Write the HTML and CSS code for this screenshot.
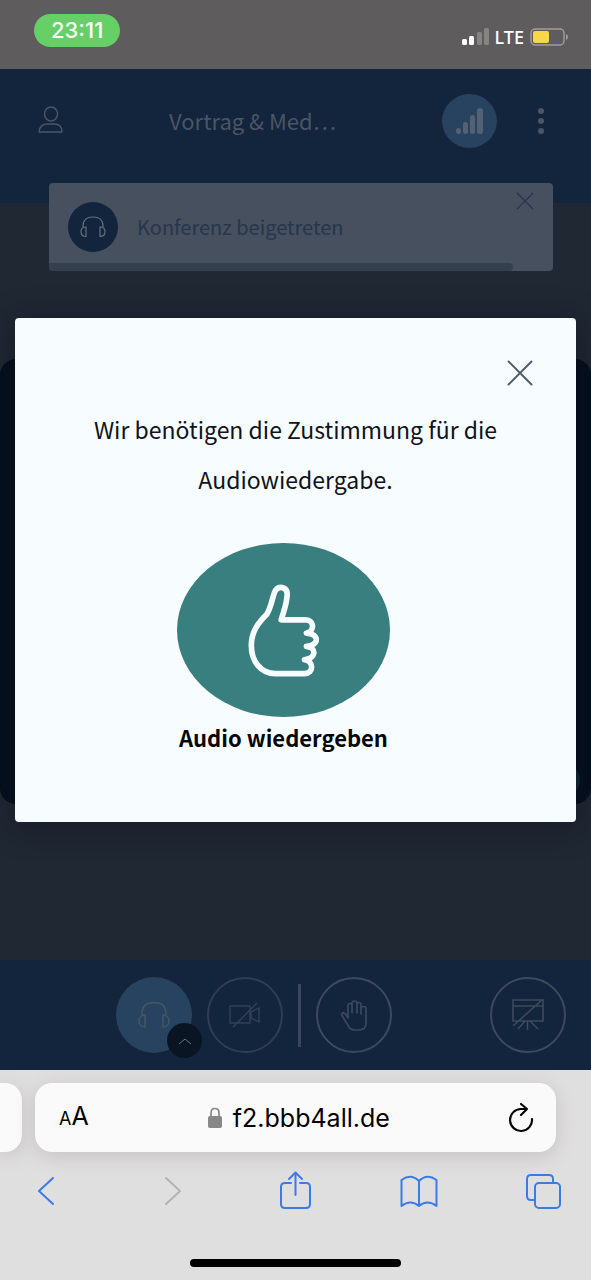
FILE: index.html
```html
<!DOCTYPE html>
<html lang="de">
<head>
<meta charset="utf-8">
<meta name="viewport" content="width=device-width, initial-scale=1">
<title>Vortrag &amp; Medien</title>
<link rel="stylesheet" href="styles.css">
</head>
<body>
<div class="status-bar">
  <time class="clock">23:11</time>
  <div class="status-icons">
    <svg class="signal" viewBox="0 0 27 18" width="27" height="18" aria-hidden="true">
      <rect x="0" y="11" width="5" height="6" rx="1.500" fill="#fff"/>
      <rect x="7" y="8" width="5" height="9" rx="1.500" fill="#fff"/>
      <rect x="15" y="4" width="5" height="13" rx="1.500" fill="#858383"/>
      <rect x="22" y="0" width="5" height="17" rx="1.500" fill="#858383"/>
    </svg>
    <span class="network">LTE</span>
    <svg viewBox="0 0 39 18" width="39" height="18" aria-hidden="true">
      <rect x="1" y="1" width="33" height="16" rx="4" fill="none" stroke="#a09e9e" stroke-width="1.400"/>
      <rect x="3" y="3" width="16" height="12" rx="2" fill="#f5d84a"/>
      <path d="M36 6q2 1 2 3t-2 3z" fill="#a09e9e"/>
    </svg>
  </div>
</div>

<div class="app">
  <header class="navbar">
    <button class="icon-button" aria-label="Teilnehmer">
      <svg viewBox="0 0 25 31" width="25" height="31" fill="none" stroke="currentColor" stroke-width="1.500">
        <ellipse cx="13" cy="8" rx="6.500" ry="7"/>
        <path d="M1 26c0-5 4-8 8-8h7c5 0 8 3 8 8z" stroke-linejoin="round"/>
      </svg>
    </button>
    <h1 class="title">Vortrag &amp; Med…</h1>
    <button class="connection" aria-label="Verbindungsstatus">
      <svg viewBox="0 0 27 27" width="27" height="27" fill="currentColor">
        <rect x="0" y="20" width="5" height="6" rx="2.500"/>
        <rect x="7" y="14" width="5" height="12" rx="2.500"/>
        <rect x="14" y="7" width="5" height="19" rx="2.500"/>
        <rect x="21" y="0" width="6" height="26" rx="2.800"/>
      </svg>
    </button>
    <button class="icon-button" aria-label="Optionen">
      <svg viewBox="0 0 12 28" width="12" height="28" fill="currentColor">
        <circle cx="6" cy="4" r="3"/><circle cx="6" cy="14" r="3"/><circle cx="6" cy="24" r="3"/>
      </svg>
    </button>
  </header>

  <main class="stage">
    <div class="media"><span class="media-action"></span></div>
  </main>

  <footer class="actions">
    <div class="action-group">
      <div class="audio">
        <button class="round filled" aria-label="Audio">
          <svg viewBox="0 0 32 28" width="32" height="28" fill="none" stroke="currentColor" stroke-width="1.500">
            <path d="M4 14v-1C4 5 9 1.500 16 1.500S28 5 28 13v1M7 14v12c-4 0-6-3-6-6s2-6 6-6zM25 14v12c4 0 6-3 6-6s-2-6-6-6z"/>
          </svg>
        </button>
        <button class="audio-menu" aria-label="Audiogerät wechseln">
          <svg viewBox="0 0 14 8" width="14" height="8" fill="none" stroke="currentColor"><path d="M1 7l6-5 6 5"/></svg>
        </button>
      </div>
      <button class="round dim" aria-label="Webcam freigeben">
        <svg viewBox="0 0 32 26" width="32" height="26" fill="none" stroke="currentColor" stroke-width="1.500">
          <path d="M1 4h20v17H1zM30 6v14l-8-4v-6zM4 25L28 1"/>
        </svg>
      </button>
      <span class="divider"></span>
      <button class="round" aria-label="Hand heben">
        <svg viewBox="0 0 28 32" width="28" height="32" fill="none" stroke="currentColor" stroke-width="1.600" stroke-linecap="round" stroke-linejoin="round">
          <path d="M8 19V6.500q0-2 2-2t2 2V14V4q0-2 2.500-2T17 4v10V5.500q0-2 2-2t2 2V15V9.500q0-2 2.500-2T26 9.500V24q0 7-7 7h-5q-3 0-5-3L2 16.500q-1-2 .500-2.500t3 1z"/>
        </svg>
      </button>
    </div>
    <button class="round" aria-label="Präsentation wiederherstellen">
      <svg viewBox="0 0 32 32" width="32" height="32" fill="none" stroke="currentColor" stroke-width="1.600">
        <path d="M1 1h30v21H1zM1 7h30M1 27L31 0M15.500 22v9M13 22l-7 8M18 22l8 8"/>
      </svg>
    </button>
  </footer>

  <div class="toast" role="status">
    <div class="toast-body">
      <span class="toast-icon">
        <svg viewBox="0 0 26 22" width="26" height="22" fill="none" stroke="currentColor" stroke-width="1.200">
          <path d="M3 11v-1c0-6 4-9 10-9s10 3 10 9v1M6 11v9.500c-3 0-5-2-5-5s2-4.500 5-4.500zM20 11v9.500c3 0 5-2 5-5S23 11 20 11z"/>
        </svg>
      </span>
      <span class="toast-text">Konferenz beigetreten</span>
      <button class="toast-close" aria-label="Schließen">
        <svg viewBox="0 0 18 18" width="18" height="18" stroke="currentColor" stroke-width="1.300"><path d="M1 1l16 16M17 1L1 17"/></svg>
      </button>
    </div>
    <div class="toast-progress"></div>
  </div>

  <section class="modal" role="dialog" aria-modal="true" aria-labelledby="modal-text">
    <button class="modal-close" aria-label="Schließen">
      <svg viewBox="0 0 26 26" width="26" height="26" stroke="currentColor" stroke-width="1.900" stroke-linecap="round"><path d="M1.500 1.500l23 23M24.500 1.500l-23 23"/></svg>
    </button>
    <p class="modal-text" id="modal-text">Wir benötigen die Zustimmung für die Audiowiedergabe.</p>
    <button class="play-audio">
      <span class="play-icon">
        <svg viewBox="262 160 214 280" width="71" height="93" fill="none" stroke="currentColor" stroke-width="17" stroke-linecap="round" stroke-linejoin="round">
          <path d="M362 268H436C462 268 464 302 438 308C478 310 478 344 438 348C470 352 468 384 432 388C462 392 460 430 432 430H345C300 430 272 392 272 345C272 303 292 278 318 252C334 228 336 192 345 179C356 164 382 168 380 194C378 224 370 240 362 268Z"/>
        </svg>
      </span>
      <span class="play-label">Audio wiedergeben</span>
    </button>
  </section>
</div>

<div class="browser">
  <div class="tabs">
    <div class="tab-previous"></div>
    <div class="address">
      <button class="text-size" aria-label="Darstellung"><span class="small-a">A</span>A</button>
      <span class="url">
        <svg viewBox="0 0 16 22" width="16" height="22" aria-hidden="true"><rect x="1" y="9" width="14" height="12" rx="2" fill="#87878a"/><path d="M4 10V6q0-4.500 4-4.500T12 6v4" fill="none" stroke="#87878a" stroke-width="1.700"/></svg>
        f2.bbb4all.de
      </span>
      <button class="reload" aria-label="Neu laden">
        <svg viewBox="0 0 26 30" width="26" height="30" fill="none" stroke="currentColor" stroke-width="2.100" stroke-linecap="round" stroke-linejoin="round"><path d="M24 16A11 11 0 1 1 13 6h6M13 1l6 5-6 6"/></svg>
      </button>
    </div>
  </div>
  <nav class="toolbar">
    <button aria-label="Zurück"><svg viewBox="0 0 38 40" width="38" height="40"><path d="M26 7L12 20l14 13"/></svg></button>
    <button class="disabled" aria-label="Vorwärts" disabled><svg viewBox="0 0 38 40" width="38" height="40"><path d="M15 7l14 13-14 13"/></svg></button>
    <button aria-label="Teilen"><svg viewBox="0 0 38 40" width="38" height="40"><path d="M15 12H9q-4 0-4 4v17q0 4 4 4h21q4 0 4-4V16q0-4-4-4h-6M19.500 24V1.500M13 8l6.500-6.500L26 8"/></svg></button>
    <button aria-label="Lesezeichen"><svg viewBox="0 0 38 40" width="38" height="40"><path d="M19 10v25M19 10Q11 2 1.500 9v26q9-7 17.500 0 8.500-7 17.500 0V9Q27 2 19 10z"/></svg></button>
    <button aria-label="Tabs"><svg viewBox="0 0 38 40" width="38" height="40"><path d="M10 29H7q-4 0-4-4V8q0-4 4-4h18q4 0 4 4v4"/><rect x="11" y="12" width="25" height="25" rx="4"/></svg></button>
  </nav>
  <div class="home-indicator"></div>
</div>
</body>
</html>
```
FILE: styles.css
```css
* {
  box-sizing: border-box;
}

body {
  margin: 0;
  min-height: 100vh;
  display: flex;
  flex-direction: column;
  font-family: "Noto Sans CJK SC", "Noto Sans", sans-serif;
}

button {
  margin: 0;
  padding: 0;
  border: 0;
  background: none;
  color: inherit;
  font: inherit;
}

svg {
  display: block;
}

.status-bar {
  height: 69px;
  padding: 14px 22px 0 34px;
  display: flex;
  justify-content: space-between;
  align-items: flex-start;
  background: #5e5c5c;
  color: #fff;
}

.clock {
  padding: 0 17px;
  border-radius: 17px;
  background: #66cf67;
  font: 500 22px/33px Inter, sans-serif;
}

.status-icons {
  display: flex;
  align-items: center;
  gap: 6px;
  padding-top: 11px;
}

.network {
  font: 500 18px/24px "Noto Sans", sans-serif;
}

.app {
  position: relative;
  flex: 1;
  display: flex;
  flex-direction: column;
  background: #1f2833;
}

.navbar {
  display: flex;
  align-items: center;
  padding: 25px 44px 55px 38px;
  background: #13243d;
  color: #4b5565;
}

.title {
  flex: 1;
  margin: 0;
  padding-bottom: 2px;
  font-size: 22px;
  line-height: 32px;
  font-weight: 400;
  text-align: center;
}

.connection {
  width: 55px;
  height: 54px;
  margin-right: 38px;
  display: grid;
  place-items: center;
  border-radius: 50%;
  background: #27435f;
  color: #536173;
}

.stage {
  flex: 1;
  display: flex;
  padding: 156px 0;
}

.media {
  flex: 1;
  display: flex;
  align-items: flex-end;
  justify-content: flex-end;
  padding: 0 11px 8px;
  border-radius: 16px;
  background: #03101f;
}

.media-action {
  width: 32px;
  height: 32px;
  border-radius: 50%;
  background: #0b2a3a;
}

.actions {
  display: flex;
  align-items: center;
  padding: 17px 25px 17px 18px;
  background: #13243d;
  color: #3e4a5c;
}

.action-group {
  flex: 1;
  display: flex;
  align-items: center;
  justify-content: center;
  gap: 15px;
}

.round {
  width: 76px;
  height: 76px;
  display: grid;
  place-items: center;
  border: 2px solid #3e4a5c;
  border-radius: 50%;
}

.dim {
  border-color: #303d55;
  color: #333f54;
}

.filled {
  border: 0;
  background: #27435f;
  color: #465668;
}

.audio {
  position: relative;
}

.audio-menu {
  position: absolute;
  right: -10px;
  bottom: -5px;
  width: 35px;
  height: 35px;
  display: grid;
  place-items: center;
  border-radius: 50%;
  background: #0a1524;
  color: #657080;
}

.divider {
  width: 3px;
  height: 63px;
  background: #3a465a;
}

.toast {
  position: absolute;
  top: 114px;
  left: 49px;
  right: 38px;
  overflow: hidden;
  border-radius: 4px;
  background: #47505e;
  color: #26364c;
}

.toast-body {
  display: flex;
  align-items: flex-start;
  padding: 9px 19px 0;
}

.toast-icon {
  width: 50px;
  height: 50px;
  margin: 10px 19px 11px 0;
  display: grid;
  place-items: center;
  border-radius: 50%;
  background: #13243d;
  color: #65707f;
}

.toast-text {
  flex: 1;
  padding-top: 20px;
  font-size: 20px;
  line-height: 30px;
}

.toast-progress {
  width: 92%;
  height: 8px;
  border-radius: 0 4px 4px 0;
  background: #34404e;
}

.modal {
  position: absolute;
  top: 249px;
  left: 15px;
  right: 15px;
  padding: 42px 43px 65px;
  display: flex;
  flex-direction: column;
  align-items: center;
  border-radius: 4px;
  background: #f7fcff;
  color: #10131a;
  box-shadow: 0 4px 30px rgb(20 12 24 / 50%);
}

.modal-close {
  align-self: flex-end;
  color: #4e5a66;
}

.modal-text {
  margin: 18px 30px 39px;
  font-size: 23px;
  line-height: 50px;
  text-align: center;
}

.play-audio {
  display: flex;
  flex-direction: column;
  align-items: center;
  margin-right: 24px;
}

.play-icon {
  width: 213px;
  height: 174px;
  display: grid;
  place-items: center;
  border-radius: 50%;
  background: #397f80;
  color: #f7fcff;
}

.play-label {
  color: #06070b;
  font-size: 22px;
  line-height: 40px;
  font-weight: 700;
}

.browser {
  display: flex;
  flex-direction: column;
  background: #e0dfdf;
  color: #000;
  overflow: hidden;
}

.tabs {
  display: flex;
  gap: 13px;
  padding: 13px 35px 0 0;
}

.tab-previous,
.address {
  background: #fafafa;
  box-shadow: 0 4px 20px #c4c2c2;
}

.tab-previous {
  width: 22px;
  border-radius: 0 17px 17px 0;
}

.address {
  flex: 1;
  height: 69px;
  display: flex;
  align-items: center;
  justify-content: space-between;
  padding: 0 22px 0 24px;
  border-radius: 17px;
  font: 400 25px/32px Inter, sans-serif;
}

.small-a {
  font-size: 18px;
}

.url {
  display: flex;
  align-items: center;
  gap: 10px;
}

.toolbar {
  display: flex;
  justify-content: space-between;
  padding: 19px 29px 0 27px;
  color: #3b7be8;
}

.toolbar svg {
  fill: none;
  stroke: currentColor;
  stroke-width: 2;
  stroke-linecap: round;
  stroke-linejoin: round;
}

.toolbar .disabled {
  color: #b4b3b4;
}

.home-indicator {
  align-self: center;
  width: 211px;
  height: 8px;
  margin: 48px 0 13px;
  border-radius: 4px;
  background: #000;
}
```
